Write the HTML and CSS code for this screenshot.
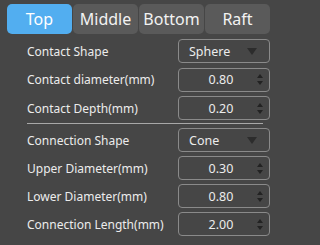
FILE: index.html
```html
<!DOCTYPE html>
<html>
<head>
<meta charset="utf-8">
<link rel="stylesheet" href="styles.css">
</head>
<body>
<div class="panel">
  <div class="tabs">
    <div class="tab active">Top</div>
    <div class="tab">Middle</div>
    <div class="tab">Bottom</div>
    <div class="tab">Raft</div>
  </div>
  <div class="form">
    <div class="group">
      <div class="row"><span class="label">Contact Shape</span><div class="box combo"><span>Sphere</span><span class="caret"></span></div></div>
      <div class="row"><span class="label">Contact diameter(mm)</span><div class="box spin"><span class="val">0.80</span><span class="arrows"><i class="up"></i><i class="down"></i></span></div></div>
      <div class="row"><span class="label">Contact Depth(mm)</span><div class="box spin"><span class="val">0.20</span><span class="arrows"><i class="up"></i><i class="down"></i></span></div></div>
    </div>
    <div class="sep"></div>
    <div class="group">
      <div class="row"><span class="label">Connection Shape</span><div class="box combo"><span>Cone</span><span class="caret"></span></div></div>
      <div class="row"><span class="label">Upper Diameter(mm)</span><div class="box spin"><span class="val">0.30</span><span class="arrows"><i class="up"></i><i class="down"></i></span></div></div>
      <div class="row"><span class="label">Lower Diameter(mm)</span><div class="box spin"><span class="val">0.80</span><span class="arrows"><i class="up"></i><i class="down"></i></span></div></div>
      <div class="row"><span class="label">Connection Length(mm)</span><div class="box spin"><span class="val">2.00</span><span class="arrows"><i class="up"></i><i class="down"></i></span></div></div>
    </div>
  </div>
</div>
</body>
</html>
```
FILE: styles.css
```css
html, body {
  margin: 0;
  padding: 0;
  background: #464646;
}
body {
  width: 279px;
  height: 245px;
  overflow: hidden;
  font-family: "Noto Sans", "DejaVu Sans", sans-serif;
  color: #ececec;
}
.panel {
  padding: 4px 9px 0 7px;
}
.tabs {
  display: flex;
  gap: 1px;
  height: 30px;
}
.tab {
  flex: 1;
  display: flex;
  align-items: center;
  justify-content: center;
  background: #5a5a5a;
  border-radius: 5px;
  font-size: 16px;
  color: #f2f2f2;
}
.tab.active {
  background: #52aef0;
  color: #ffffff;
}
.form {
  padding: 5px 0 0 20px;
}
.group {
  display: flex;
  flex-direction: column;
  gap: 4.5px;
}
.group + .sep + .group {
  gap: 4px;
}
.row {
  display: flex;
  align-items: center;
  justify-content: space-between;
  height: 24px;
}
.label {
  font-size: 12px;
}
.box {
  box-sizing: border-box;
  width: 92px;
  height: 24px;
  border: 1px solid #8a8a8a;
  border-radius: 4px;
  display: flex;
  align-items: center;
  font-size: 12.5px;
}
.combo {
  padding: 0 10px;
  justify-content: space-between;
}
.caret {
  width: 0;
  height: 0;
  border-left: 5px solid transparent;
  border-right: 5px solid transparent;
  border-top: 7px solid #2c2c2c;
  margin-right: 2px;
}
.spin {
  padding: 0 6px 0 0;
}
.val {
  flex: 1;
  text-align: center;
  padding-left: 6px;
}
.arrows {
  display: flex;
  flex-direction: column;
  gap: 3px;
  align-items: center;
}
.arrows i {
  display: block;
  width: 0;
  height: 0;
  border-left: 3.5px solid transparent;
  border-right: 3.5px solid transparent;
}
.arrows .up {
  border-bottom: 4px solid #222;
}
.arrows .down {
  border-top: 4px solid #222;
}
.sep {
  height: 1px;
  background: #a8a8a8;
  margin: 3px 7px 4px 0;
}
```
